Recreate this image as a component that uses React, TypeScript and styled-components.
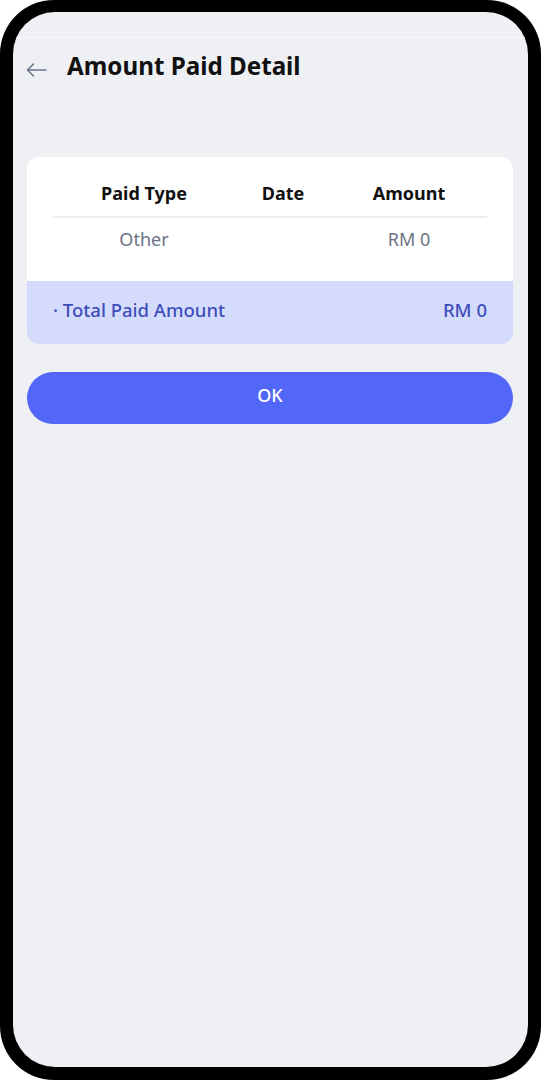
import styled, { createGlobalStyle } from 'styled-components';

const GlobalStyle = createGlobalStyle`
  body {
    margin: 0;
    background: #ffffff;
    font-family: 'Noto Sans', 'Open Sans', sans-serif;
  }
`;

const PhoneFrame = styled.div`
  width: 541px;
  height: 1080px;
  box-sizing: border-box;
  padding: 12px 13px 13px 13px;
  background: #000000;
  border-radius: 54px;
`;

const Screen = styled.div`
  height: 100%;
  display: flex;
  flex-direction: column;
  background: #eff0f4;
  border-radius: 42px;
  overflow: hidden;
`;

const StatusLine = styled.div`
  margin-top: 25px;
  height: 1px;
  background: #f9f9fb;
`;

const Header = styled.div`
  height: 60px;
  box-sizing: border-box;
  padding: 0 0 5px 13px;
  display: flex;
  align-items: center;
  gap: 20px;
`;

const BackButton = styled.button`
  display: flex;
  align-items: center;
  padding: 0;
  border: none;
  background: none;
  margin-top: 8px;
`;

const Title = styled.h1`
  margin: 0;
  font-size: 24.2px;
  font-weight: 700;
  color: #111111;
`;

const Content = styled.div`
  display: flex;
  flex-direction: column;
  padding: 0 15px 0 14px;
  margin-top: 59px;
`;

const Card = styled.div`
  background: #ffffff;
  border-radius: 12px;
  overflow: hidden;
`;

const Table = styled.div`
  padding: 0 26px 30px;
`;

const Row = styled.div<{ $head?: boolean }>`
  display: grid;
  grid-template-columns: 182px 96px 156px;
  line-height: 24px;
  padding: ${({ $head }) => ($head ? '24px 0 11px' : '9px 0 0')};
  border-bottom: ${({ $head }) => ($head ? '2px solid #eceef2' : 'none')};
`;

const Cell = styled.div<{ $head?: boolean }>`
  text-align: center;
  font-size: 18px;
  font-weight: ${({ $head }) => ($head ? 700 : 400)};
  color: ${({ $head }) => ($head ? '#111111' : '#6b7385')};
`;

const TotalRow = styled.div`
  height: 63px;
  box-sizing: border-box;
  display: flex;
  align-items: center;
  justify-content: space-between;
  padding: 0 26px 6px;
  background: #d5dbfc;
  font-size: 18.5px;
  font-weight: 500;
  color: #3e4eb9;
`;

const OkButton = styled.button`
  margin-top: 28px;
  height: 52px;
  padding: 0 0 6px;
  border: none;
  border-radius: 26px;
  background: #5266f7;
  color: #ffffff;
  font-family: inherit;
  font-size: 18px;
  font-weight: 500;
`;

const BackArrow = () => (
  <svg width="21" height="14" viewBox="0 0 21 14" fill="none">
    <path d="M20 7H1.5M7.5 1L1.5 7l6 6" stroke="#6b7690" strokeWidth="1.6" strokeLinecap="round" strokeLinejoin="round" />
  </svg>
);

const rows = [{ type: 'Other', date: '', amount: 'RM 0' }];

const App = () => (
  <>
    <GlobalStyle />
    <PhoneFrame>
      <Screen>
        <StatusLine />
        <Header>
          <BackButton>
            <BackArrow />
          </BackButton>
          <Title>Amount Paid Detail</Title>
        </Header>
        <Content>
          <Card>
            <Table>
              <Row $head>
                <Cell $head>Paid Type</Cell>
                <Cell $head>Date</Cell>
                <Cell $head>Amount</Cell>
              </Row>
              {rows.map((r, i) => (
                <Row key={i}>
                  <Cell>{r.type}</Cell>
                  <Cell>{r.date}</Cell>
                  <Cell>{r.amount}</Cell>
                </Row>
              ))}
            </Table>
            <TotalRow>
              <span>· Total Paid Amount</span>
              <span>RM 0</span>
            </TotalRow>
          </Card>
          <OkButton>OK</OkButton>
        </Content>
      </Screen>
    </PhoneFrame>
  </>
);

export default App;
